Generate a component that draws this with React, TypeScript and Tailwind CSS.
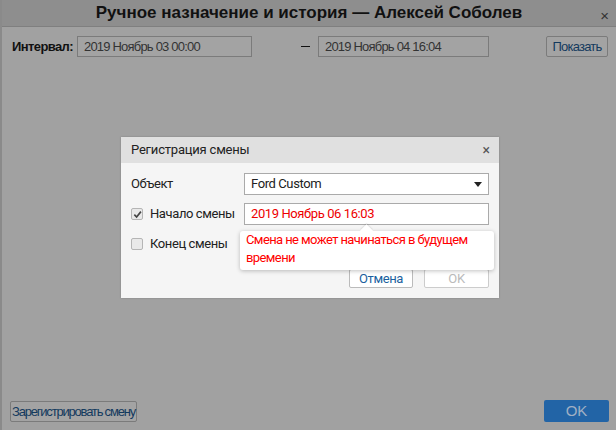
import React from 'react'

const arial = { fontFamily: '"Liberation Sans", Arial, sans-serif' }
const roboto = { fontFamily: 'Roboto, "Liberation Sans", Arial, sans-serif' }

function Check({ checked }: { checked?: boolean }) {
  return (
    <span className="w-[12px] h-[12px] rounded-[2px] border border-[#b5b5b5] bg-[#e9e9e9] flex items-center justify-center">
      {checked && (
        <svg width="9" height="9" viewBox="0 0 10 10">
          <path d="M1.5 5.2 L4 7.8 L8.8 1.8" stroke="#444" strokeWidth="1.8" fill="none" />
        </svg>
      )}
    </span>
  )
}

export default function App() {
  return (
    <div className="relative w-[616px] h-[430px] overflow-hidden bg-[#a1a1a1] border-l-2 border-[#8a8a8a]" style={arial}>
      {/* title bar */}
      <div className="h-[27px] bg-[#8e8e8e] border-b border-[#7f7f7f] flex items-center justify-center relative">
        <span className="text-[17px] font-bold text-[#111]">Ручное назначение и история — Алексей Соболев</span>
        <span className="absolute right-[7px] top-[5px] text-[15px] text-[#333]">×</span>
      </div>

      {/* interval row */}
      <div className="flex items-center mt-[9px] pl-[10px] text-[13px] tracking-[-0.8px]">
        <span className="w-[65px] font-bold text-[#111] tracking-[-0.6px]">Интервал:</span>
        <div className="w-[175px] h-[21px] border border-[#7b7b7b] bg-[#a3a3a3] flex items-center px-[6px] text-[#333]">2019 Ноябрь 03 00:00</div>
        <span className="w-[66px] flex justify-end pr-[8px] text-[#111] tracking-normal">
          <span className="w-[9px] h-[1.5px] bg-[#111]" />
        </span>
        <div className="w-[171px] h-[21px] border border-[#7b7b7b] bg-[#a3a3a3] flex items-center px-[6px] text-[#333]">2019 Ноябрь 04 16:04</div>
        <div className="w-[57px]" />
        <button className="w-[62px] h-[21px] border border-[#7b7b7b] rounded-[2px] bg-[#a3a3a3] text-[#133a5e]">Показать</button>
      </div>

      {/* bottom buttons */}
      <div className="absolute left-[8px] right-[7px] bottom-[8px] flex items-center justify-between text-[13px]">
        <button className="w-[127px] h-[21px] border border-[#7b7b7b] rounded-[2px] bg-[#a3a3a3] text-[#133a5e] tracking-[-1.2px] whitespace-nowrap">Зарегистрировать смену</button>
        <button className="w-[65px] h-[22px] rounded-[2px] bg-[#2264a6] text-[#a0b0c4] text-[15px]">OK</button>
      </div>

      {/* modal */}
      <div className="absolute left-[119px] top-[137px] w-[378px] bg-[#f5f5f5] shadow-[0_0_2px_rgba(0,0,0,0.2)]" style={roboto}>
        <div className="h-[26px] bg-[#e0e0e0] flex items-center justify-between pl-[10px] pr-[9px]">
          <span className="text-[13px] text-[#222] tracking-[-0.2px]">Регистрация смены</span>
          <span className="text-[14px] text-[#555] leading-none">×</span>
        </div>
        <div className="px-[10px] pt-[10px] pb-[10px] text-[13px] text-[#222] tracking-[-0.4px]">
          <div className="flex items-center h-[22px]">
            <span className="w-[113px]">Объект</span>
            <div className="flex-1 h-[22px] border border-[#aaa] bg-white flex items-center justify-between pl-[6px] pr-[6px]">
              <span>Ford Custom</span>
              <svg width="8" height="5" viewBox="0 0 8 5"><path d="M0 0 H8 L4 5 Z" fill="#222" /></svg>
            </div>
          </div>
          <div className="flex items-center h-[22px] mt-[8px]">
            <span className="w-[113px] flex items-center gap-[7px]"><Check checked />Начало смены</span>
            <div className="flex-1 h-[22px] border border-[#aaa] bg-white flex items-center pl-[6px] text-[#e00]">2019 Ноябрь 06 16:03</div>
          </div>
          <div className="flex items-center h-[22px] mt-[8px]">
            <span className="w-[113px] flex items-center gap-[7px]"><Check />Конец смены</span>
          </div>
          <div className="flex justify-end gap-[11px] mt-[14px]">
            <button className="w-[64px] h-[19px] border border-[#bbb] rounded-[2px] bg-white text-[#1b5f9e] leading-none">Отмена</button>
            <button className="w-[65px] h-[19px] border border-[#ccc] rounded-[2px] bg-white text-[#bbb] leading-none">OK</button>
          </div>
        </div>

        {/* tooltip */}
        <div className="absolute left-[119px] top-[94px] w-[254px] bg-white rounded-[3px] shadow-[0_1px_4px_rgba(0,0,0,0.25)] px-[6px] pt-0 pb-[3px] text-[13px] leading-[18px] tracking-[-0.6px] text-[#f00]">
          <span className="absolute -top-[5px] left-[122px] w-[9px] h-[9px] bg-white rotate-45 shadow-[-1px_-1px_1px_rgba(0,0,0,0.08)]" />
          <span className="relative">Смена не может начинаться в будущем времени</span>
        </div>
      </div>
    </div>
  )
}
